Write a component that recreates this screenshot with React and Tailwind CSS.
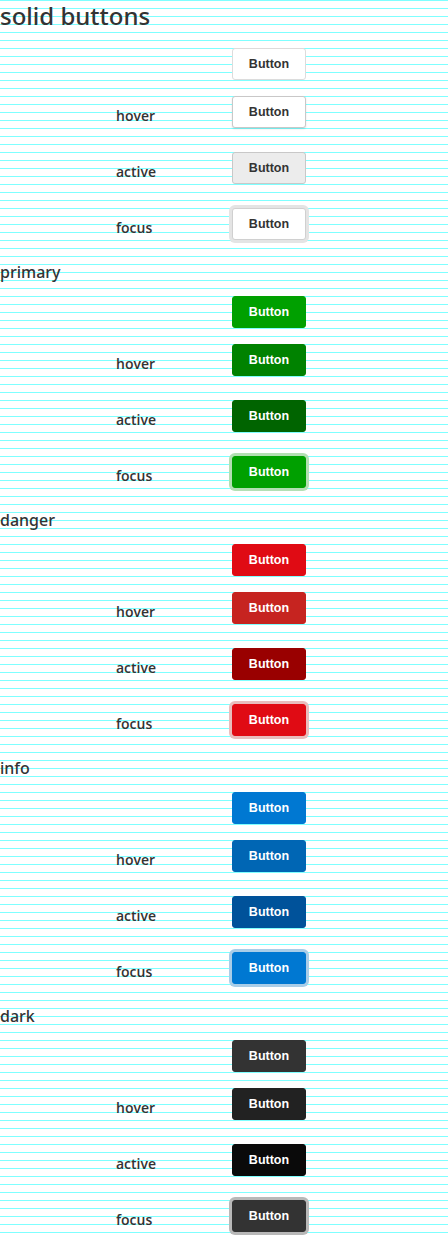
const variants = [
  {
    name: 'solid buttons',
    big: true,
    states: {
      normal: 'bg-white text-[#333] border-[#dcdcdc]',
      hover: 'bg-white text-[#333] border-[#c8c8c8] shadow-[0_1px_2px_rgba(0,0,0,0.12)]',
      active: 'bg-[#ececec] text-[#333] border-[#c8c8c8]',
      focus: 'bg-white text-[#333] border-[#d0d0d0] ring-[3px] ring-[#e4e4e4]',
    },
  },
  {
    name: 'primary',
    states: {
      normal: 'bg-[#00a000] text-white border-[#00a000]',
      hover: 'bg-[#008200] text-white border-[#008200]',
      active: 'bg-[#006400] text-white border-[#006400]',
      focus: 'bg-[#00a000] text-white border-[#00a000] ring-[3px] ring-[#b3dfb3]',
    },
  },
  {
    name: 'danger',
    states: {
      normal: 'bg-[#e00b14] text-white border-[#e00b14]',
      hover: 'bg-[#c62420] text-white border-[#c62420]',
      active: 'bg-[#990000] text-white border-[#990000]',
      focus: 'bg-[#e00b14] text-white border-[#e00b14] ring-[3px] ring-[#e8bdbd]',
    },
  },
  {
    name: 'info',
    states: {
      normal: 'bg-[#0078d2] text-white border-[#0078d2]',
      hover: 'bg-[#0066b4] text-white border-[#0066b4]',
      active: 'bg-[#00529a] text-white border-[#00529a]',
      focus: 'bg-[#0078d2] text-white border-[#0078d2] ring-[3px] ring-[#a9cde8]',
    },
  },
  {
    name: 'dark',
    states: {
      normal: 'bg-[#333333] text-white border-[#333333]',
      hover: 'bg-[#222222] text-white border-[#222222]',
      active: 'bg-[#0a0a0a] text-white border-[#0a0a0a]',
      focus: 'bg-[#333333] text-white border-[#333333] ring-[3px] ring-[#b8b8b8]',
    },
  },
]

function Btn({ cls }) {
  return (
    <button
      className={`w-[74px] h-[32px] rounded-[3px] border text-[12.5px] font-bold font-['Liberation_Sans',Arial,sans-serif] ${cls}`}
    >
      Button
    </button>
  )
}

function Section({ v }) {
  return (
    <section>
      {v.big ? (
        <h1 className="text-[24px] leading-[32px] font-medium font-['Noto_Sans',sans-serif] mb-4">{v.name}</h1>
      ) : (
        <h2 className="text-[16px] leading-[32px] font-medium font-['Noto_Sans',sans-serif] mb-2">{v.name}</h2>
      )}
      <div className="flex pl-[232px] mb-4">
        <Btn cls={v.states.normal} />
      </div>
      {['hover', 'active', 'focus'].map((s, i) => (
        <div key={s} className={`flex items-start ${i < 2 ? 'h-[56px]' : 'h-[48px]'}`}>
          <div className="w-[232px] pl-[116px] pt-[10px] text-[14px] leading-[20px] font-semibold">{s}</div>
          <Btn cls={v.states[s]} />
        </div>
      ))}
    </section>
  )
}

export default function App() {
  return (
    <div className="min-h-screen bg-white [background-image:repeating-linear-gradient(to_bottom,#7fffff_0,#7fffff_1px,transparent_1px,transparent_8px)] text-[#333] font-['Open_Sans',sans-serif]">
      {variants.map((v) => (
        <Section key={v.name} v={v} />
      ))}
    </div>
  )
}
